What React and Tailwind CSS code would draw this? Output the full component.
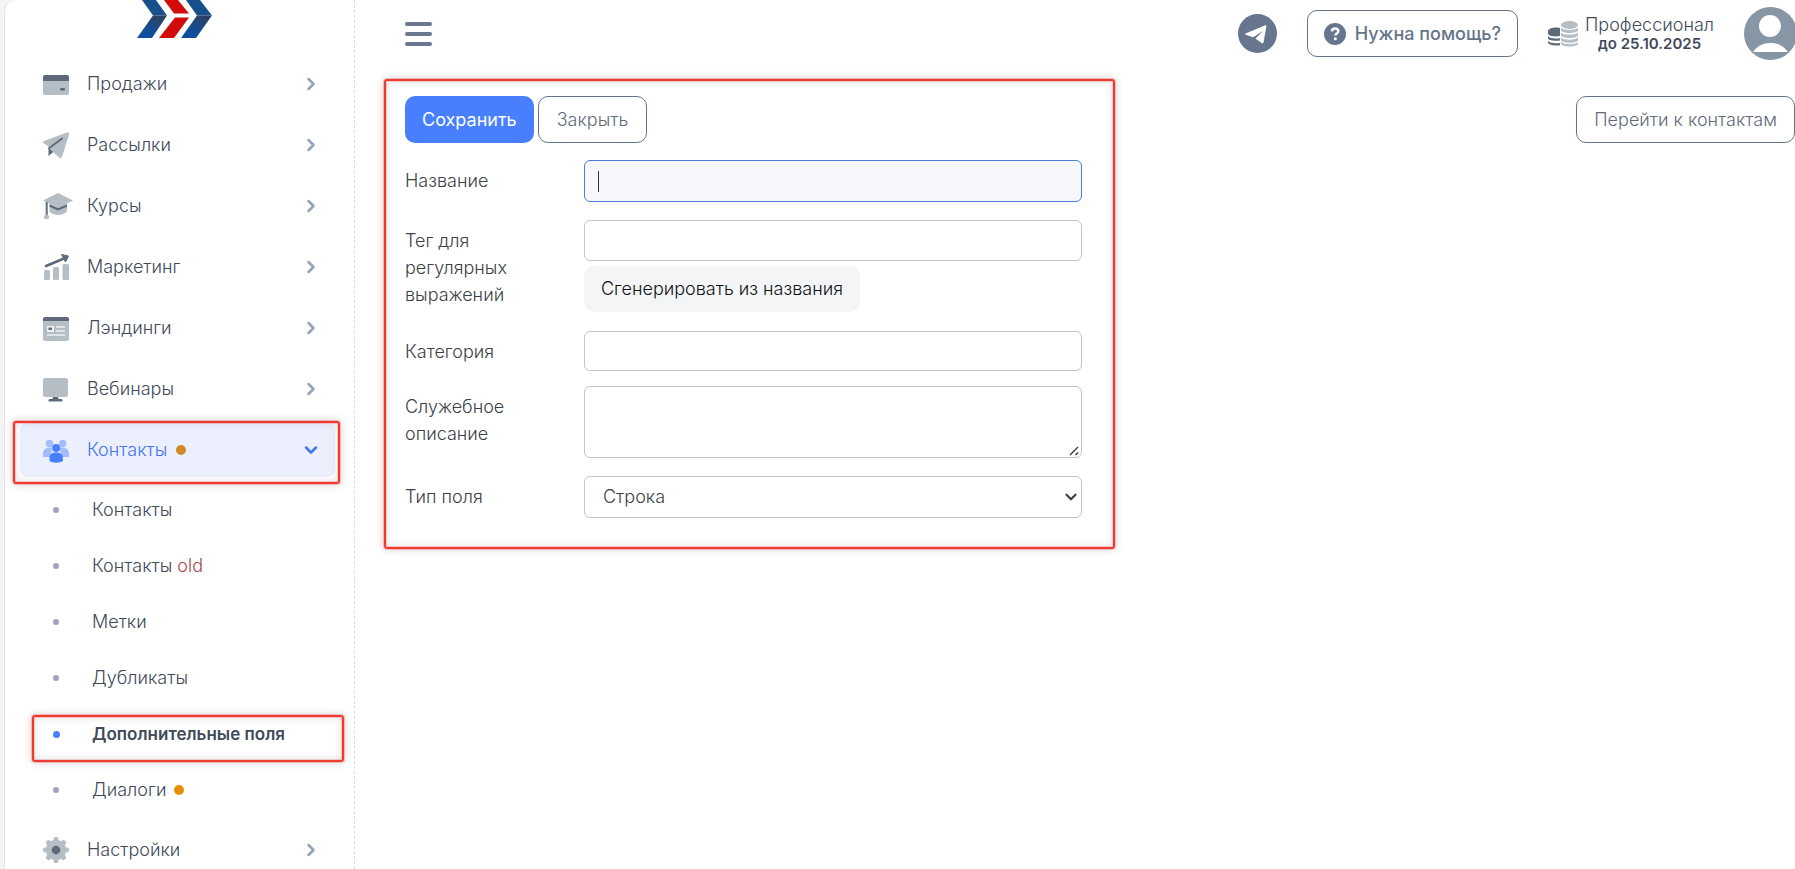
import { useState } from 'react';
import { ChevronDown, ChevronRight } from 'lucide-react';

const LIGHT = '#b5bdc5';
const DARK = '#5d6a7a';

// Red frame with a soft shadow that sits over the area it points at
const FRAME = 'rounded-[3px] border-2 border-[#f0392f] shadow-[0_0_0_1px_rgba(240,57,47,0.25),0_0_9px_rgba(60,40,40,0.25),inset_0_0_0_1px_rgba(240,57,47,0.2),inset_0_0_9px_rgba(60,40,40,0.16)]';

const Icon = ({ children, w = 26 }) => (
  <svg width={w} height="26" viewBox={`0 0 ${w} 26`} className="shrink-0" aria-hidden="true">{children}</svg>
);

const CardIcon = () => (
  <Icon>
    <rect x="0" y="4" width="26" height="20" rx="2" fill={LIGHT} />
    <path d="M0 10V6a2 2 0 0 1 2-2h22a2 2 0 0 1 2 2v4z" fill={DARK} />
    <rect x="17" y="17" width="5" height="2.4" rx="1" fill={DARK} />
  </Icon>
);

const PlaneIcon = () => (
  <Icon>
    <path d="M1 9 24 0.4a1.6 1.6 0 0 1 2 2L19 25a1.6 1.6 0 0 1-2.8.4L10 20l-4-5L0.5 11A1.2 1.2 0 0 1 1 9z" fill={LIGHT} />
    <path d="M19 6.5 6 16.2" stroke={DARK} strokeWidth="1.8" fill="none" strokeLinecap="round" />
    <path d="M5.500 15.500v8.600l4.800-4z" fill={DARK} />
  </Icon>
);

const CapIcon = () => (
  <Icon w={30}>
    <path d="M6.500 9h17.500v9.500c-4 4.500-13.500 4.500-17.500 0z" fill={LIGHT} />
    <path d="M6.500 11.500 15 15.300 24 11.500v2.300l-9 3.800-8.500-3.800z" fill={DARK} />
    <path d="M15 0 0 7.400 15 14.500 30 7.400z" fill={LIGHT} />
    <path d="M3.700 9v14" stroke={DARK} strokeWidth="2" />
    <circle cx="3.500" cy="24" r="2.500" fill={LIGHT} />
  </Icon>
);

const ChartIcon = () => (
  <Icon>
    <rect x="1" y="16" width="6" height="10" rx="1.500" fill={LIGHT} />
    <rect x="10" y="13" width="6" height="13" rx="1.500" fill={LIGHT} />
    <rect x="19.500" y="10" width="6.500" height="16" rx="1.500" fill={LIGHT} />
    <path d="M3 12 21 4.500" stroke={DARK} strokeWidth="2.600" strokeLinecap="round" />
    <path d="M18.500 0.500 25.500 2 22.500 8z" fill={DARK} stroke={DARK} strokeLinejoin="round" />
  </Icon>
);

const PageIcon = () => (
  <Icon>
    <rect x="0" y="2" width="26" height="24" rx="2" fill={LIGHT} />
    <path d="M0 6V4a2 2 0 0 1 2-2h22a2 2 0 0 1 2 2v2z" fill={DARK} />
    <rect x="4" y="11" width="7" height="6" fill="#eef1f3" />
    <rect x="5.500" y="12.500" width="3.500" height="2.500" fill={DARK} />
    <path d="M13 12h9M13 16h9M4 20h18" stroke="#eef1f3" strokeWidth="1.400" />
  </Icon>
);

const MonitorIcon = () => (
  <Icon>
    <rect x="0" y="2" width="25" height="19" rx="2" fill={LIGHT} />
    <path d="M10 21h5l.6 2H18a1.400 1.400 0 0 1 1 2.500H6A1.400 1.400 0 0 1 7 23h2.400z" fill={DARK} />
  </Icon>
);

const PeopleIcon = () => (
  <Icon>
    <g fill="#a3bcfb">
      <circle cx="6.500" cy="6.500" r="3.700" />
      <circle cx="19.700" cy="6.500" r="3.700" />
      <path d="M0 20v-4a6 6 0 0 1 6-5.500h3L8 20zM26 20v-4a6 6 0 0 0-6-5.500h-3l1 9.500z" />
    </g>
    <circle cx="13.200" cy="11" r="4" fill="#477fff" />
    <path d="M6.500 24v-3.500c0-3 2.500-5 6.700-5s6.700 2 6.700 5V24c-3.500 2.200-10 2.200-13.400 0z" fill="#477fff" />
  </Icon>
);

const GearIcon = () => (
  <Icon>
    <circle cx="13" cy="13" r="10.200" fill={LIGHT} />
    {[0, 45, 90, 135].map(a => (
      <rect key={a} x="10.500" y="0" width="5" height="26" rx="2" fill={LIGHT} transform={`rotate(${a} 13 13)`} />
    ))}
    <circle cx="13" cy="13" r="4.300" fill={DARK} />
  </Icon>
);

const Logo = () => (
  <svg width="75" height="38" viewBox="0 0 75 38" className="block" aria-hidden="true">
    <defs>
      <linearGradient id="fold" x1="0.7" y1="0" x2="0.3" y2="1">
        <stop offset="0" stopColor="#2b4360" />
        <stop offset="0.8" stopColor="#0d4f9e" />
      </linearGradient>
    </defs>
    <path d="M5 0h14l11 15.500H16z" fill="#17508c" />
    <path d="M16 15.500h14L15 38H0z" fill="url(#fold)" />
    <path d="M27 0h14l11 13.500H37z" fill="#d10a0a" />
    <path d="M38 17.500h14L37 38H22z" fill="#d10a0a" />
    <path d="M49 0h14l12 15.500H60z" fill="#17508c" />
    <path d="M60 15.500h15L59 38H44z" fill="url(#fold)" />
  </svg>
);

const Coins = () => (
  <svg width="30" height="26" viewBox="0 0 30 26" className="shrink-0" aria-hidden="true">
    <g fill={DARK}>
      <path d="M0 10c0-2 4-3.500 8-3.500 2 0 3 .2 4 .5v8c-5 1-12 0-12-2.500z" />
      <path d="M0 15.300c2 2 7 2.600 12 1.900v2.400c-6 .8-12-.2-12-2.500zM0 20c2 2 7 2.600 12 1.900v2.400c-6 .8-12-.5-12-2.800z" />
    </g>
    <g fill={LIGHT}>
      <ellipse cx="21.500" cy="4" rx="8.500" ry="4" />
      <path d="M13 6.800c3 3 14 3 17 0v2.300c0 4-17 4-17 0zM13 11.600c3 3 14 3 17 0v2.300c0 4-17 4-17 0zM13 16.400c3 3 14 3 17 0v2.300c0 4-17 4-17 0zM13 21.100c3 3 14 3 17 0v1.500c0 4-17 4-17 0z" />
    </g>
  </svg>
);

const menu = [
  { label: 'Продажи', icon: CardIcon },
  { label: 'Рассылки', icon: PlaneIcon },
  { label: 'Курсы', icon: CapIcon },
  { label: 'Маркетинг', icon: ChartIcon },
  { label: 'Лэндинги', icon: PageIcon },
  { label: 'Вебинары', icon: MonitorIcon },
  { label: 'Контакты', icon: PeopleIcon, open: true, dot: 'bg-[#d08a22]' },
];

const submenu = [
  { label: 'Контакты' },
  { label: 'Контакты', suffix: 'old' },
  { label: 'Метки' },
  { label: 'Дубликаты' },
  { label: 'Дополнительные поля', active: true },
  { label: 'Диалоги', dot: true },
];

const MenuItem = ({ label, icon: Glyph, open, dot }) => (
  <button
    type="button"
    aria-expanded={!!open}
    className={`relative flex h-[54px] w-full shrink-0 items-center rounded-lg pr-[14px] pl-[23px] ${open ? 'bg-[#ecf0fe] text-[#4474ec]' : 'text-[#3f4a5a]'}`}
  >
    <span className="flex w-11 items-center"><Glyph /></span>
    <span>{label}</span>
    {dot && <span className={`ml-[9px] size-[10px] rounded-full ${dot}`} />}
    <span className="ml-auto">
      {open
        ? <ChevronDown size={20} strokeWidth={3} />
        : <ChevronRight size={20} strokeWidth={3} className="text-[#94a3b8]" />}
    </span>
    {open && <span className={`pointer-events-none absolute -top-[2px] -right-[5px] -bottom-[7px] -left-[7px] ${FRAME}`} />}
  </button>
);

const SubItem = ({ label, suffix, active, dot }) => (
  <a href="#" className={`relative flex h-14 items-center pl-[33px] text-[#3f4a5a] ${active ? 'text-[17px] font-semibold' : ''}`}>
    <span className="flex w-[39px] shrink-0">
      <span className={`rounded-full ${active ? 'size-[7px] bg-[#477fff]' : 'size-[6px] bg-[#a1a5b7]'}`} />
    </span>
    <span>{label}{suffix && <span className="text-[#a8454e]"> {suffix}</span>}</span>
    {dot && <span className="ml-2 size-[10px] rounded-full bg-[#e98f07]" />}
    {active && <span className={`pointer-events-none absolute top-[9px] -right-[9px] bottom-0 left-3 ${FRAME}`} />}
  </a>
);

const Sidebar = () => (
  <aside className="flex h-screen w-[351px] shrink-0 flex-col overflow-hidden rounded-tl-xl border-r border-l border-r-[#d9dce3] border-l-[#e3e3e6] bg-white [border-right-style:dashed]">
    <a href="#" aria-label="Главная" className="mb-[19px] ml-[132px] w-[75px]"><Logo /></a>
    <nav className="flex flex-col pr-[19px] pl-[15px]">
      <div className="flex flex-col gap-[7px]">
        {menu.map(m => <MenuItem key={m.label} {...m} />)}
      </div>
      <div className="my-[5px] flex flex-col">
        {submenu.map((s, i) => <SubItem key={i} {...s} />)}
      </div>
      <MenuItem label="Настройки" icon={GearIcon} />
    </nav>
  </aside>
);

const Header = () => (
  <header className="flex h-[67px] items-center pl-[50px] text-[#667489]">
    <button type="button" aria-label="Меню" className="flex w-[27px] flex-col gap-[6px]">
      <span className="h-1 rounded-full bg-[#6b7790]" />
      <span className="h-1 rounded-full bg-[#6b7790]" />
      <span className="h-1 rounded-full bg-[#6b7790]" />
    </button>
    <a href="#" aria-label="Telegram" className="ml-auto">
      <svg width="39" height="39" viewBox="0 0 39 39" className="block">
        <circle cx="19.500" cy="19.500" r="19.500" fill="#67768e" />
        <path d="M7.500 19.500 26.800 11.500c1.100-.4 1.700.1 1.500 1.300l-2.700 15.400c-.2 1.200-1 1.500-2 .8l-6.200-4.600 8-7.700-10.200 6.600-6.800-2.200c-1.200-.4-1.700-1.200-.9-1.600z" fill="#fff" />
      </svg>
    </a>
    <button type="button" className="ml-[30px] flex h-[47px] items-center rounded-[10px] border border-[#667489] px-4 text-lg font-medium">
      <svg width="22" height="22" viewBox="0 0 22 22" className="mr-[9px]" aria-hidden="true">
        <circle cx="11" cy="11" r="11" fill="#67768e" />
        <path d="M7.800 8.400c.2-1.800 1.500-2.900 3.300-2.900s3.200 1 3.200 2.700c0 2.400-3 2.200-3 4.300" stroke="#fff" strokeWidth="2.400" fill="none" />
        <circle cx="11.300" cy="15.700" r="1.500" fill="#fff" />
      </svg>
      Нужна помощь?
    </button>
    <div className="ml-[30px] flex items-center gap-[7px]">
      <Coins />
      <div className="text-center text-[#3f4a5a]">
        <div className="text-lg leading-5">Профессионал</div>
        <div className="text-[15px] leading-[18px] font-semibold">до 25.10.2025</div>
      </div>
    </div>
    <button type="button" aria-label="Профиль" className="ml-[30px] w-[51px] shrink-0 overflow-hidden">
      <svg width="53" height="53" viewBox="0 0 53 53" className="block max-w-none">
        <circle cx="26.500" cy="26.500" r="26.500" fill="#8796a5" />
        <circle cx="26" cy="19" r="11" fill="#fff" />
        <path d="M9 45c4-6 10-9 17.500-9S40 39 44 45z" fill="#fff" />
      </svg>
    </button>
  </header>
);

const FIELD = 'block w-full rounded-md border border-[#c3c4c8] bg-white px-[13px] outline-none';

const Row = ({ id, label, children, className = '' }) => (
  <div className={`grid grid-cols-[179px_minmax(0,1fr)] ${className}`}>
    <label htmlFor={id} className="w-[130px] pt-[7px] leading-[27px] text-[#3c4146]">{label}</label>
    <div>{children}</div>
  </div>
);

const FieldForm = () => {
  const [name, setName] = useState('');
  const [tag, setTag] = useState('');

  return (
    <form
      onSubmit={e => e.preventDefault()}
      className={`w-[731px] max-w-full pt-[15px] pr-[31px] pb-[29px] pl-[19px] ${FRAME}`}
    >
      <div className="mb-[17px] flex gap-1">
        <button type="submit" className="h-[47px] rounded-[10px] bg-[#477fff] px-[17px] font-normal text-white">Сохранить</button>
        <button type="button" className="h-[47px] rounded-[10px] border border-[#667489] px-[18px] text-[#5f6a7a]">Закрыть</button>
      </div>
      <Row id="name" label="Название" className="mb-[18px]">
        <div className="relative">
          <input
            id="name"
            value={name}
            onChange={e => setName(e.target.value)}
            className="block h-[42px] w-full rounded-md border border-[#4d7be0] bg-[#f6f8fb] px-[13px] outline-none"
          />
          {!name && <span className="pointer-events-none absolute top-[11px] left-[14px] h-[21px] w-px bg-[#333]" />}
        </div>
      </Row>
      <Row id="tag" label="Тег для регулярных выражений" className="mb-[19px]">
        <input id="tag" value={tag} onChange={e => setTag(e.target.value)} className={`h-[41px] ${FIELD}`} />
        <button type="button" onClick={() => setTag(name)} className="mt-[5px] h-[46px] rounded-[10px] bg-[#f3f5f7] px-[17px] font-light text-[#101214]">
          Сгенерировать из названия
        </button>
      </Row>
      <Row id="category" label="Категория" className="mb-[15px]">
        <input id="category" className={`h-10 ${FIELD}`} />
      </Row>
      <Row id="description" label="Служебное описание" className="mb-[18px]">
        <div className="relative">
          <textarea id="description" className={`h-[72px] resize ${FIELD}`} />
          <svg width="12" height="12" viewBox="0 0 12 12" className="pointer-events-none absolute right-[2px] bottom-[2px] bg-white" aria-hidden="true">
            <path d="M2 11 10 3M7.500 11 10 8.500" stroke="#444" strokeWidth="1.500" />
          </svg>
        </div>
      </Row>
      <Row id="type" label="Тип поля">
        <div className="relative">
          <select id="type" className="block h-[42px] w-full appearance-none rounded-md border border-[#c3c4c8] bg-white pl-[18px] font-light text-[#3c4146]">
            <option>Строка</option>
            <option>Число</option>
            <option>Дата</option>
          </select>
          <ChevronDown size={18} strokeWidth={3} className="pointer-events-none absolute top-3 right-[2px] text-[#3f4246]" />
        </div>
      </Row>
    </form>
  );
};

export default function App() {
  return (
    <div className="flex min-h-screen bg-[#f4f4f5] pl-1 font-['Inter',sans-serif] text-lg font-light text-[#3f4a5a]">
      <Sidebar />
      <div className="min-w-0 flex-1 bg-white">
        <Header />
        <main className="flex items-start justify-between pt-3 pl-[29px]">
          <FieldForm />
          <a href="#" className="mt-[17px] flex h-[47px] shrink-0 items-center rounded-[10px] border border-[#667489] px-[17px] text-[#5f6a7a]">
            Перейти к контактам
          </a>
        </main>
      </div>
    </div>
  );
}
